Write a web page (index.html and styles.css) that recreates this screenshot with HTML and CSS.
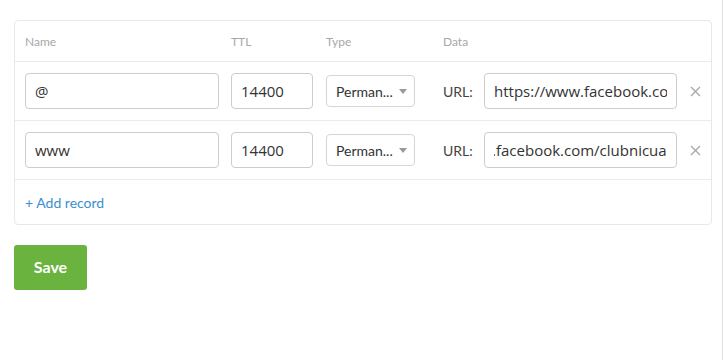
FILE: index.html
```html
<!DOCTYPE html>
<html lang="en">
<head>
  <meta charset="UTF-8">
  <meta name="viewport" content="width=device-width, initial-scale=1.0">
  <title>Redirect records</title>
  <link rel="stylesheet" href="styles.css">
</head>
<body>
  <div class="page">
    <div class="records">
      <div class="records-head">
        <span>Name</span>
        <span>TTL</span>
        <span>Type</span>
        <span>Data</span>
        <span></span>
      </div>
      <div class="record">
        <input class="field name" type="text" value="@">
        <input class="field ttl" type="text" value="14400">
        <div class="select">Perman...<span class="caret"></span></div>
        <div class="data">
          <label>URL:</label>
          <input class="field url" type="text" value="https://www.facebook.com/clubnicua">
        </div>
        <button class="remove" title="Remove">
          <svg width="11" height="11" viewBox="0 0 11 11"><path d="M1 1L10 10M10 1L1 10" stroke="#a9a9a9" stroke-width="1.4" fill="none"/></svg>
        </button>
      </div>
      <div class="record">
        <input class="field name" type="text" value="www">
        <input class="field ttl" type="text" value="14400">
        <div class="select">Perman...<span class="caret"></span></div>
        <div class="data">
          <label>URL:</label>
          <input class="field url scrolled" type="text" value="https://www.facebook.com/clubnicua">
        </div>
        <button class="remove" title="Remove">
          <svg width="11" height="11" viewBox="0 0 11 11"><path d="M1 1L10 10M10 1L1 10" stroke="#a9a9a9" stroke-width="1.4" fill="none"/></svg>
        </button>
      </div>
      <div class="records-foot">
        <a href="#" class="add-record">+ Add record</a>
      </div>
    </div>
    <button class="save-button">Save</button>
  </div>
  <script>
    document.querySelectorAll('.field.scrolled').forEach(input => {
      input.scrollLeft = input.scrollWidth;
    });
  </script>
</body>
</html>
```

FILE: styles.css
```css
body {
  font-family: 'Lato', 'Open Sans', sans-serif;
  background-color: white;
  color: #333;
  margin: 0;
  padding: 0;
}
.page {
  box-sizing: border-box;
  width: 723px;
  height: 360px;
  padding: 20px 10px 0 14px;
  border-right: 1px solid #e2e2e2;
}
.records {
  border: 1px solid #e8e8e8;
  border-radius: 4px;
}
.records-head,
.record {
  display: grid;
  grid-template-columns: 206px 95px 117px 243px 1fr;
  align-items: center;
  padding: 0 10px;
  border-bottom: 1px solid #ebebeb;
}
.records-head {
  height: 40px;
  font-size: 12px;
  color: #a8a8a8;
}
.record {
  height: 58px;
}
.field {
  box-sizing: border-box;
  height: 36px;
  padding: 0 9px;
  border: 1px solid #cdcdcd;
  border-radius: 4px;
  font-family: 'Open Sans', sans-serif;
  font-size: 15px;
  color: #333;
  background-color: white;
  outline: none;
}
.field.name {
  width: 194px;
}
.field.ttl {
  width: 82px;
}
.field.url {
  width: 193px;
}
.select {
  box-sizing: border-box;
  display: flex;
  align-items: center;
  justify-content: space-between;
  width: 89px;
  height: 32px;
  padding: 0 7px 0 9px;
  border: 1px solid #d6d6d6;
  border-radius: 4px;
  font-size: 14px;
  color: #333;
}
.caret {
  width: 0;
  height: 0;
  border-left: 4px solid transparent;
  border-right: 4px solid transparent;
  border-top: 5px solid #999;
}
.data {
  display: flex;
  align-items: center;
}
.data label {
  width: 41px;
  font-size: 14px;
  color: #444;
}
.remove {
  display: flex;
  justify-content: center;
  align-items: center;
  padding: 0 0 0 3px;
  border: none;
  background: none;
  cursor: pointer;
}
.records-foot {
  display: flex;
  align-items: center;
  height: 44px;
  padding: 0 10px;
}
.add-record {
  font-size: 14px;
  color: #3b8fd0;
  text-decoration: none;
}
.add-record:hover {
  text-decoration: underline;
}
.save-button {
  margin-top: 20px;
  width: 73px;
  height: 45px;
  padding: 0 0 2px;
  border: none;
  border-radius: 3px;
  background-color: #69b33e;
  color: white;
  font-family: 'Lato', sans-serif;
  font-weight: bold;
  font-size: 16px;
  cursor: pointer;
}
```
